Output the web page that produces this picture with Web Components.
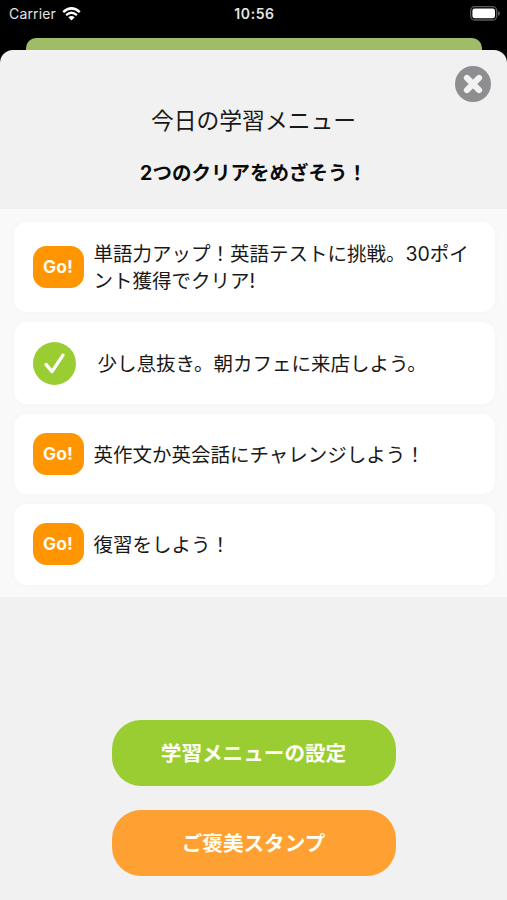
<!DOCTYPE html>
<html lang="ja">
<head>
<meta charset="utf-8">
<title>今日の学習メニュー</title>
<style>
body{margin:0;background:#000;color:#191919;font-family:Inter,"Noto Sans CJK JP",sans-serif;overflow:hidden}
</style>
</head>
<body>
<study-screen></study-screen>
<script>
const define=(name,html)=>customElements.define(name,class extends HTMLElement{
  constructor(){super();this.attachShadow({mode:"open"}).innerHTML=html;}
});

define("status-bar",`<style>
:host{display:grid;grid-template-columns:1fr auto 1fr;align-items:center;height:27px;padding:0 7px 0 9px;color:#e4e4e4;font-size:14px;line-height:20px;box-sizing:border-box}
.left{display:flex;align-items:center;gap:6px}
.carrier{letter-spacing:.15px}
time{font-weight:600;letter-spacing:.6px}
.battery{justify-self:end}
svg{display:block}
</style>
<div class="left"><span class="carrier">Carrier</span>
<svg width="19" height="14" viewBox="0 0 19 14" fill="none" stroke="#fff"><path d="M1.2 5.1Q9.5 -2.3 17.8 5.1" stroke-width="2.5"/><path d="M4.1 8.1Q9.5 3.5 14.9 8.1" stroke-width="2.3"/><path d="M9.5 13.5L6.3 10.3Q9.5 7.7 12.7 10.3Z" fill="#fff" stroke="none"/></svg></div>
<time>10:56</time>
<svg class="battery" width="30" height="15" viewBox="0 0 30 15"><rect x=".7" y=".7" width="26" height="13.3" rx="4" fill="none" stroke="#5b5b5b" stroke-width="1.3"/><rect x="2.4" y="2.4" width="22.6" height="9.9" rx="2.3" fill="#fff"/><path d="M28 5Q30 5.8 30 7.4T28 9.8Z" fill="#5b5b5b"/></svg>`);

define("close-button",`<style>:host{display:block;width:36px;height:36px}svg{display:block}</style>
<svg width="36" height="36" viewBox="0 0 36 36"><circle cx="18" cy="18" r="18" fill="#8e8e90"/><path d="M11.7 11.7L24.3 24.3M24.3 11.7L11.7 24.3" stroke="#f2f2f2" stroke-width="5.2"/><path d="M11.9 11.9L24.1 24.1M24.1 11.9L11.9 24.1" stroke="#f2f2f2" stroke-width="6" stroke-linecap="round"/></svg>`);

define("go-badge",`<style>
:host{display:flex;align-items:center;justify-content:center;width:51px;height:42px;border-radius:13.5px;background:#ff9500;color:#fffaf0;font-size:17.5px;font-weight:700;letter-spacing:.1px;line-height:20px}
</style>Go!`);

define("done-badge",`<style>:host{display:block;width:43px;height:43px;margin-right:12px}svg{display:block}</style>
<svg width="43" height="43" viewBox="0 0 43 43"><circle cx="21.5" cy="21.5" r="21.5" fill="#9acd32"/><path d="M13 22.4L19 29.6L30 13.2" fill="none" stroke="#fff" stroke-width="3.3" stroke-linecap="round" stroke-linejoin="round"/></svg>`);

define("task-card",`<style>
:host{display:flex;align-items:center;gap:10px;box-sizing:border-box;height:var(--h,80px);padding:0 18px 0 19px;border-radius:13px;background:#fff;box-shadow:0 0 8px rgba(0,0,0,.022)}
.text{flex:1;padding-top:2.5px;font-size:19.5px;line-height:27.5px}
::slotted([slot=badge]){flex:none}
</style><slot name="badge"></slot><div class="text"><slot></slot></div>`);

define("action-button",`<style>
:host{display:flex;align-items:center;justify-content:center;box-sizing:border-box;width:284px;height:65.5px;padding-top:2px;border-radius:29px;background:var(--fill);color:#fffef4;font-size:20.6px;font-weight:700;line-height:30px}
</style><slot></slot>`);

define("study-screen",`<style>
:host{display:flex;flex-direction:column;height:900px}
.behind{flex:none;height:25px;margin:10.5px 25px 0 25.5px;border-radius:10px 10px 0 0;background:#9fbc67}
.sheet{flex:1;margin-top:-12.5px;border-radius:13px 13px 0 0;background:#f1f1f1;position:relative;display:flex;flex-direction:column}
close-button{position:absolute;top:16px;right:16px}
header{height:159px;box-sizing:border-box;padding-top:54px;text-align:center}
h1{margin:0;font-size:22.8px;font-weight:400;line-height:34px}
h2{margin:21px 0 0;font-size:19.5px;font-weight:700;line-height:28px;color:#0b0b0b}
.list{display:flex;flex-direction:column;gap:10px;padding:13px 12.5px 12.5px 13.5px;background:#f9f9f9}
footer{display:flex;flex-direction:column;align-items:center;gap:24.5px;padding-top:123px}
</style>
<status-bar></status-bar>
<div class="behind"></div>
<main class="sheet">
<close-button></close-button>
<header><h1>今日の学習メニュー</h1><h2>2つのクリアをめざそう！</h2></header>
<section class="list">
<task-card style="--h:90px"><go-badge slot="badge"></go-badge>単語力アップ！英語テストに挑戦。30ポイント獲得でクリア!</task-card>
<task-card style="--h:82px"><done-badge slot="badge"></done-badge>少し息抜き。朝カフェに来店しよう。</task-card>
<task-card><go-badge slot="badge"></go-badge>英作文か英会話にチャレンジしよう！</task-card>
<task-card style="--h:80.5px"><go-badge slot="badge"></go-badge>復習をしよう！</task-card>
</section>
<footer><action-button style="--fill:#9acd32">学習メニューの設定</action-button><action-button style="--fill:#ffa033">ご褒美スタンプ</action-button></footer>
</main>`);
</script>
</body>
</html>
